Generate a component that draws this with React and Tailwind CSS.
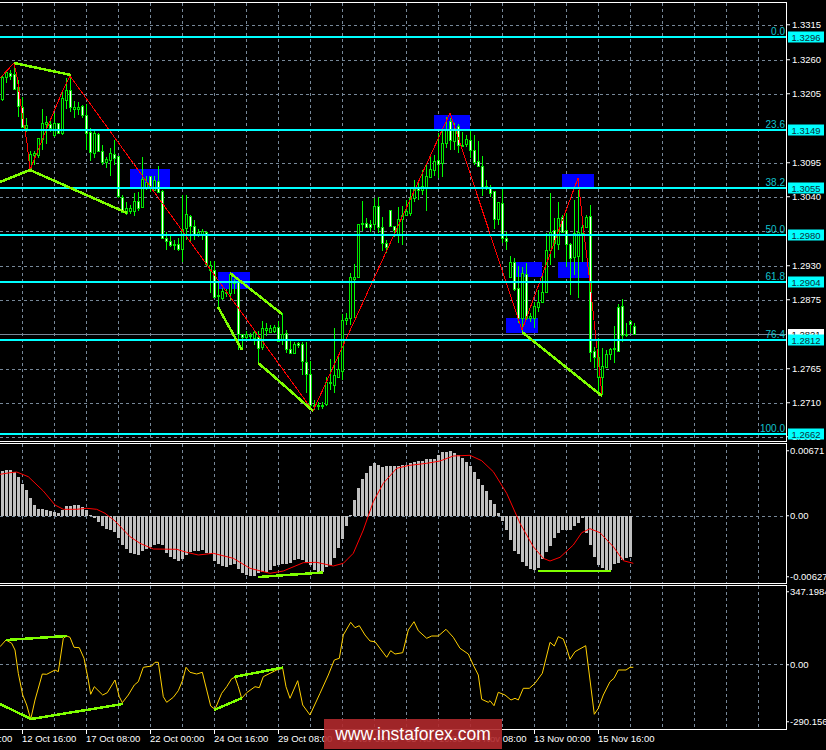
import React from 'react';

const FONT = "font-['Liberation_Sans',Arial,sans-serif]";
const CHART_W = 786;

// candles: [high, low, bodyTop, bodyBottom, bearish] in page pixels, 4px apart starting x=2.5
const candles = [
  [75,101,77,99,0],[71,83,72,77,0],[70,80,73,76,1],[65,89,74,89,1],[80,117,87,106,1],[97,128,107,127,1],[118,132,125,128,0],[151,170,154,168,0],
  [151,165,153,155,0],[138,158,138,155,0],[109,150,123,139,0],[116,144,122,124,0],[118,132,124,128,1],[113,137,123,135,0],[123,134,123,133,1],[90,135,98,133,0],
  [78,109,90,100,0],[76,112,90,107,1],[101,118,107,109,0],[102,115,107,109,0],[105,118,106,115,1],[104,150,115,133,1],[128,161,132,152,1],[130,158,133,153,0],
  [133,152,134,151,1],[145,165,151,162,1],[157,168,159,162,0],[148,176,153,160,0],[140,165,154,158,1],[156,198,156,196,1],[195,212,197,212,1],[202,215,208,213,0],
  [205,214,208,211,0],[193,216,201,211,0],[192,211,201,208,1],[157,208,179,207,0],[176,190,182,187,0],[176,192,176,186,1],[176,191,180,190,0],[166,192,181,192,1],
  [190,238,191,238,1],[232,250,238,241,1],[235,247,241,245,1],[240,250,244,245,0],[238,251,244,249,1],[195,262,229,249,0],[195,240,214,228,0],[215,241,216,226,1],
  [220,240,226,234,1],[229,237,232,234,0],[229,240,231,234,0],[231,266,232,264,1],[261,293,265,270,0],[261,297,270,297,1],[280,310,295,296,0],[288,300,291,298,0],
  [289,297,292,293,0],[273,300,274,293,0],[279,294,281,283,0],[280,350,282,334,1],[334,350,334,337,1],[331,340,334,337,0],[333,341,335,336,0],[331,345,332,338,0],
  [331,362,337,348,1],[321,350,328,347,0],[323,336,328,330,0],[325,333,328,332,0],[325,333,327,331,0],[321,342,327,341,1],
  [313,345,334,340,0],[330,353,333,349,1],[341,353,349,353,1],[342,353,344,353,0],[342,348,343,345,1],[342,375,344,361,1],[342,393,362,374,1],[361,408,374,405,1],
  [400,410,405,406,1],[402,410,405,406,1],[402,409,405,406,1],[377,406,382,404,0],[359,390,382,383,0],[328,393,375,385,0],[354,378,369,377,0],[314,380,320,371,0],
  [313,325,318,320,0],[273,325,277,318,0],[264,318,277,279,0],[224,278,224,277,0],[201,231,223,224,0],[218,228,223,227,1],[220,232,224,227,1],[198,230,206,224,0],
  [197,233,206,227,1],[217,251,227,243,1],[240,253,243,247,1],[210,227,210,226,1],[226,237,226,230,1],[207,243,219,234,0],[206,245,215,219,0],[200,216,211,215,0],
  [188,216,198,213,0],[180,202,187,198,0],[183,200,187,190,1],[170,195,186,190,0],[163,211,176,187,0],[157,178,169,177,0],[155,176,161,170,0],[133,178,160,164,1],
  [128,177,143,163,0],[117,148,129,143,0],[118,150,121,140,1],[123,150,129,141,0],[124,153,126,145,1],[132,147,145,146,0],[135,147,139,144,0],[130,158,140,150,1],
  [135,165,150,162,1],[141,167,161,166,1],[156,196,166,187,1],[180,190,186,187,0],[185,197,187,193,1],[191,229,191,219,1],[202,225,202,219,0],[189,243,203,238,1],
  [232,250,238,241,1],[256,277,262,277,0],[258,291,262,289,1],[266,323,288,318,1],[267,333,273,318,0],[263,320,274,318,1],[313,322,316,318,0],[302,328,306,318,0],
  [290,312,302,307,0],[273,302,292,302,0],[233,292,250,292,0],[193,265,232,250,0],[218,258,230,243,1],[202,250,218,244,0],[215,232,217,232,1],[213,267,230,244,1],
  [243,295,244,258,1],[200,275,233,257,0],[190,298,232,256,0],[222,262,227,233,0],[215,228,217,227,0],[205,362,216,352,1],[347,368,351,357,1],[338,392,357,377,0],
  [348,395,366,377,0],[350,367,354,367,0],[348,360,349,354,0],[326,363,348,349,0],[304,352,307,351,1],[299,342,306,335,1],[323,337,334,335,0],[320,333,321,324,1],
  [323,335,326,334,1],
];

// bar heights above/below the MACD zero line, same 4px spacing
const macdBars = [
  45,46,46,44,39,32,26,18,11,7,7,6,5,4,3,6,10,10,11,11,9,6,1,
  -2,-6,-10,-13,-14,-16,-22,-29,-33,-37,-38,-39,-35,-33,-31,-29,-28,-29,-37,-41,-43,-45,-43,-39,-36,-35,-35,-34,-37,-38,
  -45,-48,-50,-51,-49,-48,-53,-57,-59,-60,-60,-57,-56,-56,-54,-50,-49,-48,-48,-47,-44,-43,-44,-46,-49,-54,-57,-56,-51,-49,-42,-32,-23,-10,1,
  16,28,37,43,50,53,51,49,50,50,50,50,51,
  51,53,54,55,55,57,57,57,61,64,64,65,63,61,58,54,50,44,37,31,25,16,12,3,
  -5,-14,-24,-35,-38,-46,-50,-53,-54,-52,-43,-36,-30,-22,-17,-14,-14,-14,-10,-7,-2,-17,-29,-41,-49,-52,-54,-54,-48,-47,-44,-42,-41,
];

const toPoints = (pts) => pts.map((p) => p.join(',')).join(' ');
// traces below were read off 3x crops, ox/oy is the crop origin
const fromCrop = (raw, ox, oy) => raw.map(([x, y]) => [+(ox + x / 3).toFixed(1), +(oy + y / 3).toFixed(1)]);

const macdSignal = [
  ...fromCrop([[0,133],[30,128],[50,126],[85,140],[130,183],[165,225],[190,238],[230,238],[260,235],[290,238],[315,250],[345,273],[390,320],[420,340],[460,357],[530,358],[560,367],[595,375],[640,370],[700,385],[750,415],[810,430],[850,423],[910,398],[950,397],[1000,408],[1030,400],[1060,370],[1090,300],[1120,215],[1150,160],[1190,115],[1228,106]], 0, 430),
  ...fromCrop([[0,106],[50,100],[90,93],[130,78],[180,76],[215,92],[250,125],[290,190],[330,280],[370,350],[400,385],[420,393],[450,382],[490,345],[515,308],[540,296],[570,308],[610,350],[640,392],[670,400]], 410, 430),
];

const cciLine = [
  ...fromCrop([[0,200],[18,180],[35,190],[45,210],[55,280],[68,345],[80,375],[92,418],[105,360],[127,282],[140,283],[165,270],[175,275],[190,175],[200,168],[210,172],[222,202],[238,203],[252,235],[265,300],[272,343],[283,320],[308,345],[322,338],[345,300],[358,350],[367,368],[385,345],[403,315],[415,305],[430,262],[455,258],[465,247],[475,247],[490,350],[500,367],[520,352],[535,332],[548,300],[558,262],[570,277],[590,282],[607,277],[632,378],[645,388],[665,340],[680,320],[695,296],[705,292],[715,320],[725,355],[740,338],[765,320],[778,323],[790,290],[810,280],[830,270],[848,265],[858,320],[870,355],[893,302],[908,375],[930,405],[960,340],[985,285],[1003,240],[1018,235],[1030,165],[1052,127],[1065,143],[1078,137],[1095,165],[1110,183],[1125,185],[1160,232],[1172,212],[1185,222],[1208,218]], 0, 580),
  ...fromCrop([[-5,150],[12,125],[25,152],[50,175],[65,168],[85,168],[108,148],[130,172],[150,205],[175,222],[190,255],[205,285],[215,358],[235,367],[240,362],[252,377],[265,337],[285,345],[303,360],[315,355],[325,360],[340,325],[358,325],[375,310],[397,280],[420,187],[433,198],[445,170],[460,177],[470,205],[480,238],[495,215],[527,197],[540,300],[553,403],[565,385],[580,345],[600,305],[612,295],[625,270],[648,270],[660,262],[670,262]], 410, 580),
];

const zigzag = [[0,78],[14,63],[17,77],[22,113],[27,143],[30,170],[47,128],[63,90],[70,76],[313,411],[450,113],[522,330],[578,178],[583,225],[590,283],[602,395]];

const limeMain = [
  [[14,63],[71,75]],
  [[0,182],[30,170],[127,213]],
  [[218,307],[242,350]],
  [[230,273],[282,314]],
  [[258,363],[270,373],[313,411]],
  [[522,332],[602,396]],
];
const limeMacd = [[[258,577],[323,572.5]], [[538,571],[611,571]]];
const limeCci = [
  [[0,704],[31,719],[123,704]],
  [[6,640],[67,636]],
  [[214,710],[242,698]],
  [[234,677],[283,667.5]],
];

const blueBoxes = [
  [130,169,40,19],[218,272,32,17],[434,115,36,14],[515,262,27,15],[506,318,32,15],[562,174,32,13],[558,262,32,16],
];

const levels = [
  { y: 37, price: '1.3296', fib: '0.0' },
  { y: 129.5, price: '1.3149', fib: '23.6' },
  { y: 187.5, price: '1.3055', fib: '38.2' },
  { y: 234.5, price: '1.2980', fib: '50.0' },
  { y: 281.5, price: '1.2904', fib: '61.8' },
  { y: 339.5, price: '1.2812', fib: '76.4' },
  { y: 434, price: '1.2662', fib: '100.0' },
];

const priceTicks = [
  [25,'1.3315'],[60,'1.3260'],[94,'1.3205'],[163,'1.3095'],[197,'1.3040'],[266,'1.2930'],[300,'1.2875'],[369,'1.2765'],[403,'1.2710'],[437,'1.2655'],
];
const priceGrid = [25,60,94,129,163,197,231,266,300,369,403,437];

const dates = ['10 Oct 00:00','12 Oct 16:00','17 Oct 08:00','22 Oct 00:00','24 Oct 16:00','29 Oct 08:00','01 Nov 00:00','05 Nov 16:00','08 Nov 08:00','13 Nov 00:00','15 Nov 16:00'];

function VerticalGrid({ top, bottom }) {
  return Array.from({ length: 24 }, (_, i) => (
    <line key={i} x1={22.5 + 32 * i} x2={22.5 + 32 * i} y1={top} y2={bottom} stroke="#778899" strokeDasharray="3 3" />
  ));
}

function DashedRow({ y, from = 0 }) {
  return <line x1={from} x2={CHART_W} y1={y + 0.5} y2={y + 0.5} stroke="#778899" strokeDasharray="3 3" />;
}

function Lines({ sets, color = '#7fff00', width = 2.5 }) {
  return sets.map((pts, i) => (
    <polyline key={i} points={toPoints(pts)} fill="none" stroke={color} strokeWidth={width} shapeRendering="crispEdges" />
  ));
}

function Candle({ data, index }) {
  const [high, low, top, bottom, bearish] = data;
  const x = 2.5 + 4 * index;
  return (
    <g>
      <line x1={x} x2={x} y1={high} y2={low} stroke="#00ff00" shapeRendering="crispEdges" />
      <rect x={x - 1} y={top + 0.5} width={2} height={Math.max(bottom - top, 1)} fill={bearish ? '#ffffff' : '#000000'} stroke="#00e800" shapeRendering="crispEdges" />
    </g>
  );
}

// one chart window: framed drawing on the left, its value scale on the right
function Pane({ top, height, labels, children }) {
  return (
    <div className="flex shrink-0" style={{ height }}>
      <div className="w-[787px] shrink-0 border-y border-r border-white">
        <svg className="block w-full h-full" viewBox={`0 ${top + 1} ${CHART_W} ${height - 2}`} preserveAspectRatio="none">
          {children}
        </svg>
      </div>
      <div className="relative flex-1 overflow-hidden">{labels}</div>
    </div>
  );
}

function ScaleLabel({ top, y, children }) {
  return (
    <div className="absolute left-0 flex items-center gap-[2px] -translate-y-1/2 whitespace-nowrap" style={{ top: y - top }}>
      <span className="w-[3px] h-px bg-white" />
      <span className="text-white text-[9.5px] leading-none">{children}</span>
    </div>
  );
}

function IndicatorLabel({ top, y, children }) {
  return (
    <div className="absolute left-0 flex items-center gap-px -translate-y-1/2 whitespace-nowrap" style={{ top: y - top }}>
      <span className="w-[2px] h-px bg-white" />
      <span className="text-white text-[9.5px] leading-none">{children}</span>
    </div>
  );
}

function PriceTag({ top, y, price }) {
  return (
    <div className="absolute left-px w-[36px] h-[11px] bg-[#00ffff] text-[#10303a] text-[9.5px] leading-[11px] text-center -translate-y-1/2" style={{ top: y - top }}>
      {price}
    </div>
  );
}

function MainChart() {
  const top = 2;
  return (
    <Pane
      top={top}
      height={440}
      labels={
        <>
          {priceTicks.map(([y, text]) => <ScaleLabel key={text} top={top} y={y}>{text}</ScaleLabel>)}
          <div className="absolute left-px top-[327px] w-[36px] h-[11px] bg-white text-black text-[9.5px] leading-[11px] text-center">1.2821</div>
          {levels.map((l) => <PriceTag key={l.price} top={top} y={l.y} price={l.price} />)}
        </>
      }
    >
      <VerticalGrid top={3} bottom={441} />
      {priceGrid.map((y) => <DashedRow key={y} y={y} />)}
      <line x1={0} x2={CHART_W} y1={334.5} y2={334.5} stroke="#778899" />
      {blueBoxes.map(([x, y, w, h]) => <rect key={x + '-' + y} x={x} y={y} width={w} height={h} fill="#0000ff" />)}
      {candles.map((c, i) => <Candle key={i} data={c} index={i} />)}
      <polyline points={toPoints(zigzag)} fill="none" stroke="#ff0000" shapeRendering="crispEdges" />
      {levels.map((l) => (
        <g key={l.fib}>
          <line x1={0} x2={CHART_W} y1={l.y} y2={l.y} stroke="#00ffff" strokeWidth={2} shapeRendering="crispEdges" />
          <text x={785} y={l.y - 2} textAnchor="end" fill="#12c4cf" fontSize="10" fontFamily="'Liberation Sans', Arial, sans-serif">{l.fib}</text>
        </g>
      ))}
      <Lines sets={limeMain} />
    </Pane>
  );
}

function MacdChart() {
  const top = 443;
  return (
    <Pane
      top={top}
      height={141}
      labels={
        <>
          <IndicatorLabel top={top} y={451}>0.00671</IndicatorLabel>
          <IndicatorLabel top={top} y={516}>0.00</IndicatorLabel>
          <IndicatorLabel top={top} y={577}>-0.00627</IndicatorLabel>
        </>
      }
    >
      <VerticalGrid top={444} bottom={583} />
      <DashedRow y={516} />
      {macdBars.map((h, i) => (
        <rect key={i} x={1 + 4 * i} y={h > 0 ? 516 - h : 516} width={3} height={Math.abs(h)} fill="#c0c0c0" />
      ))}
      <polyline points={toPoints(macdSignal)} fill="none" stroke="#ff0000" />
      <Lines sets={limeMacd} />
    </Pane>
  );
}

function CciChart() {
  const top = 585;
  return (
    <Pane
      top={top}
      height={145}
      labels={
        <>
          <IndicatorLabel top={top} y={592}>347.1984</IndicatorLabel>
          <IndicatorLabel top={top} y={664.5}>0.00</IndicatorLabel>
          <IndicatorLabel top={top} y={722}>-290.156</IndicatorLabel>
        </>
      }
    >
      <VerticalGrid top={586} bottom={729} />
      <DashedRow y={664} />
      <polyline points={toPoints(cciLine)} fill="none" stroke="#ffd000" />
      <Lines sets={limeCci} />
    </Pane>
  );
}

export default function App() {
  return (
    <div className={`relative w-[826px] h-[750px] overflow-hidden bg-black pt-[2px] flex flex-col gap-px ${FONT}`}>
      <MainChart />
      <MacdChart />
      <CciChart />
      <div className="flex ml-[-42px] -mt-px">
        {dates.map((d) => (
          <div key={d} className="w-16 shrink-0">
            <div className="w-px h-[4px] bg-white" />
            <span className="block text-white text-[9.5px] leading-none whitespace-nowrap">{d}</span>
          </div>
        ))}
      </div>
      <div className="absolute left-[324px] top-[719px] w-[178px] h-[30px] bg-[#b0292c]/90 text-white text-[17.5px] leading-[30px] text-center">
        www.instaforex.com
      </div>
    </div>
  );
}
